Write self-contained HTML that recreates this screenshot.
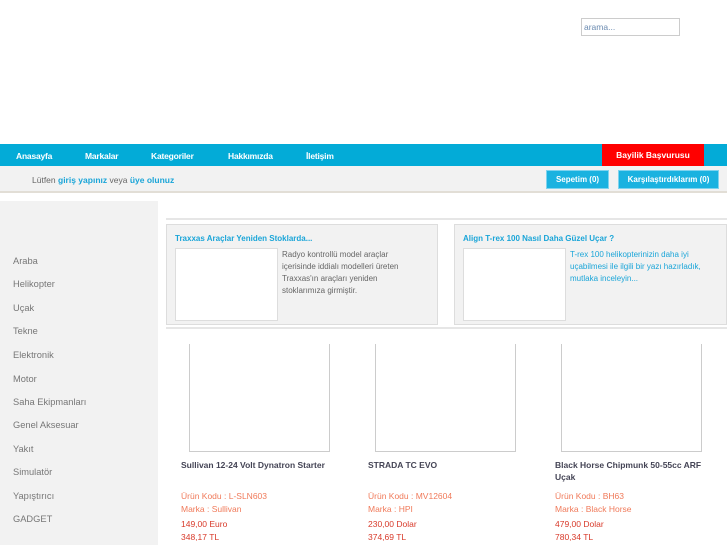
<!DOCTYPE html>
<html><head><meta charset="utf-8"><style>
*{margin:0;padding:0;box-sizing:border-box}
body{width:727px;height:545px;overflow:hidden;background:#fff;font-family:"Liberation Sans",Arial,sans-serif;position:relative;font-size:9px}
.a{position:absolute}
.nav{left:0;top:144px;width:727px;height:22px;background:#03abd7}
.nav span{position:absolute;top:7px;color:#fff;font-weight:bold;font-size:8.5px;letter-spacing:-.2px}
.sub{left:0;top:166px;width:727px;height:27px;background:#f2f2f2;border-bottom:2px solid #e2ded6}
.btn{background:#1ab2e0;border:1px solid #7fd3ee;color:#fff;font-weight:bold;font-size:8px;text-align:center;line-height:17px;height:19px}
.side{left:0;top:201px;width:158px;height:344px;background:#f2f2f2}
.side div{position:absolute;left:13px;color:#777;font-size:9.3px}
.hr{height:2px;background:#e6e6e6}
.box{background:#f2f2f2;border:1px solid #ddd;height:101px;top:224px}
.box .t{position:absolute;left:8px;top:9px;color:#1aa5d8;font-weight:bold;font-size:8px}
.img{background:#fff;border:1px solid #ddd}
.box p{position:absolute;top:24px;font-size:8px;line-height:12px}
.pi{top:344px;width:141px;height:108px;border:1px solid #ccc;border-top:none;background:#fff}
.pt{top:459px;color:#445;font-weight:bold;font-size:8.5px;line-height:12px;width:155px}
.pc{color:#f07a5a;font-size:8.5px;line-height:13px}
.pp{color:#d83a2a;font-size:8.5px;line-height:12.5px}
</style></head><body>
<div class="a" style="left:581px;top:18px;width:99px;height:18px;border:1px solid #ccc;background:#fff;color:#6a8ab0;font-size:8.5px;padding:3px 2px">arama...</div>
<div class="a nav">
<span style="left:16px">Anasayfa</span><span style="left:85px">Markalar</span><span style="left:151px">Kategoriler</span><span style="left:228px">Hakkımızda</span><span style="left:306px">İletişim</span>
<div class="a" style="left:602px;top:0;width:102px;height:22px;background:#f00;color:#fff;font-weight:bold;font-size:8.5px;text-align:center;line-height:22px">Bayilik Başvurusu</div>
</div>
<div class="a sub">
<div class="a" style="left:32px;top:9px;color:#666;font-size:8.5px">Lütfen <b style="color:#1aa5d8">giriş yapınız</b> veya <b style="color:#1aa5d8">üye olunuz</b></div>
<div class="a btn" style="left:546px;top:4px;width:63px">Sepetim (0)</div>
<div class="a btn" style="left:618px;top:4px;width:101px">Karşılaştırdıklarım (0)</div>
</div>
<div class="a side">
<div style="top:55px">Araba</div><div style="top:78px">Helikopter</div><div style="top:102px">Uçak</div><div style="top:125px">Tekne</div><div style="top:149px">Elektronik</div><div style="top:173px">Motor</div><div style="top:196px">Saha Ekipmanları</div><div style="top:219px">Genel Aksesuar</div><div style="top:243px">Yakıt</div><div style="top:266px">Simulatör</div><div style="top:290px">Yapıştırıcı</div><div style="top:313px">GADGET</div>
</div>
<div class="a hr" style="left:166px;top:218px;width:561px"></div>
<div class="a box" style="left:166px;width:272px">
<div class="t">Traxxas Araçlar Yeniden Stoklarda...</div>
<div class="a img" style="left:8px;top:23px;width:103px;height:73px"></div>
<p style="left:115px;color:#666">Radyo kontrollü model araçlar<br>içerisinde iddialı modelleri üreten<br>Traxxas'ın araçları yeniden<br>stoklarımıza girmiştir.</p>
</div>
<div class="a box" style="left:454px;width:273px">
<div class="t">Align T-rex 100 Nasıl Daha Güzel Uçar ?</div>
<div class="a img" style="left:8px;top:23px;width:103px;height:73px"></div>
<p style="left:115px;color:#1aa5d8">T-rex 100 helikopterinizin daha iyi<br>uçabilmesi ile ilgili bir yazı hazırladık,<br>mutlaka inceleyin...</p>
</div>
<div class="a hr" style="left:166px;top:327px;width:561px"></div>
<div class="a pi" style="left:189px"></div><div class="a pi" style="left:375px"></div><div class="a pi" style="left:561px"></div>
<div class="a pt" style="left:181px">Sullivan 12-24 Volt Dynatron Starter</div>
<div class="a pt" style="left:368px">STRADA TC EVO</div>
<div class="a pt" style="left:555px">Black Horse Chipmunk 50-55cc ARF Uçak</div>
<div class="a" style="left:181px;top:490px"><div class="pc">Ürün Kodu : L-SLN603<br>Marka : Sullivan</div><div class="pp" style="margin-top:2px">149,00 Euro<br>348,17 TL</div></div>
<div class="a" style="left:368px;top:490px"><div class="pc">Ürün Kodu : MV12604<br>Marka : HPI</div><div class="pp" style="margin-top:2px">230,00 Dolar<br>374,69 TL</div></div>
<div class="a" style="left:555px;top:490px"><div class="pc">Ürün Kodu : BH63<br>Marka : Black Horse</div><div class="pp" style="margin-top:2px">479,00 Dolar<br>780,34 TL</div></div>
</body></html>
